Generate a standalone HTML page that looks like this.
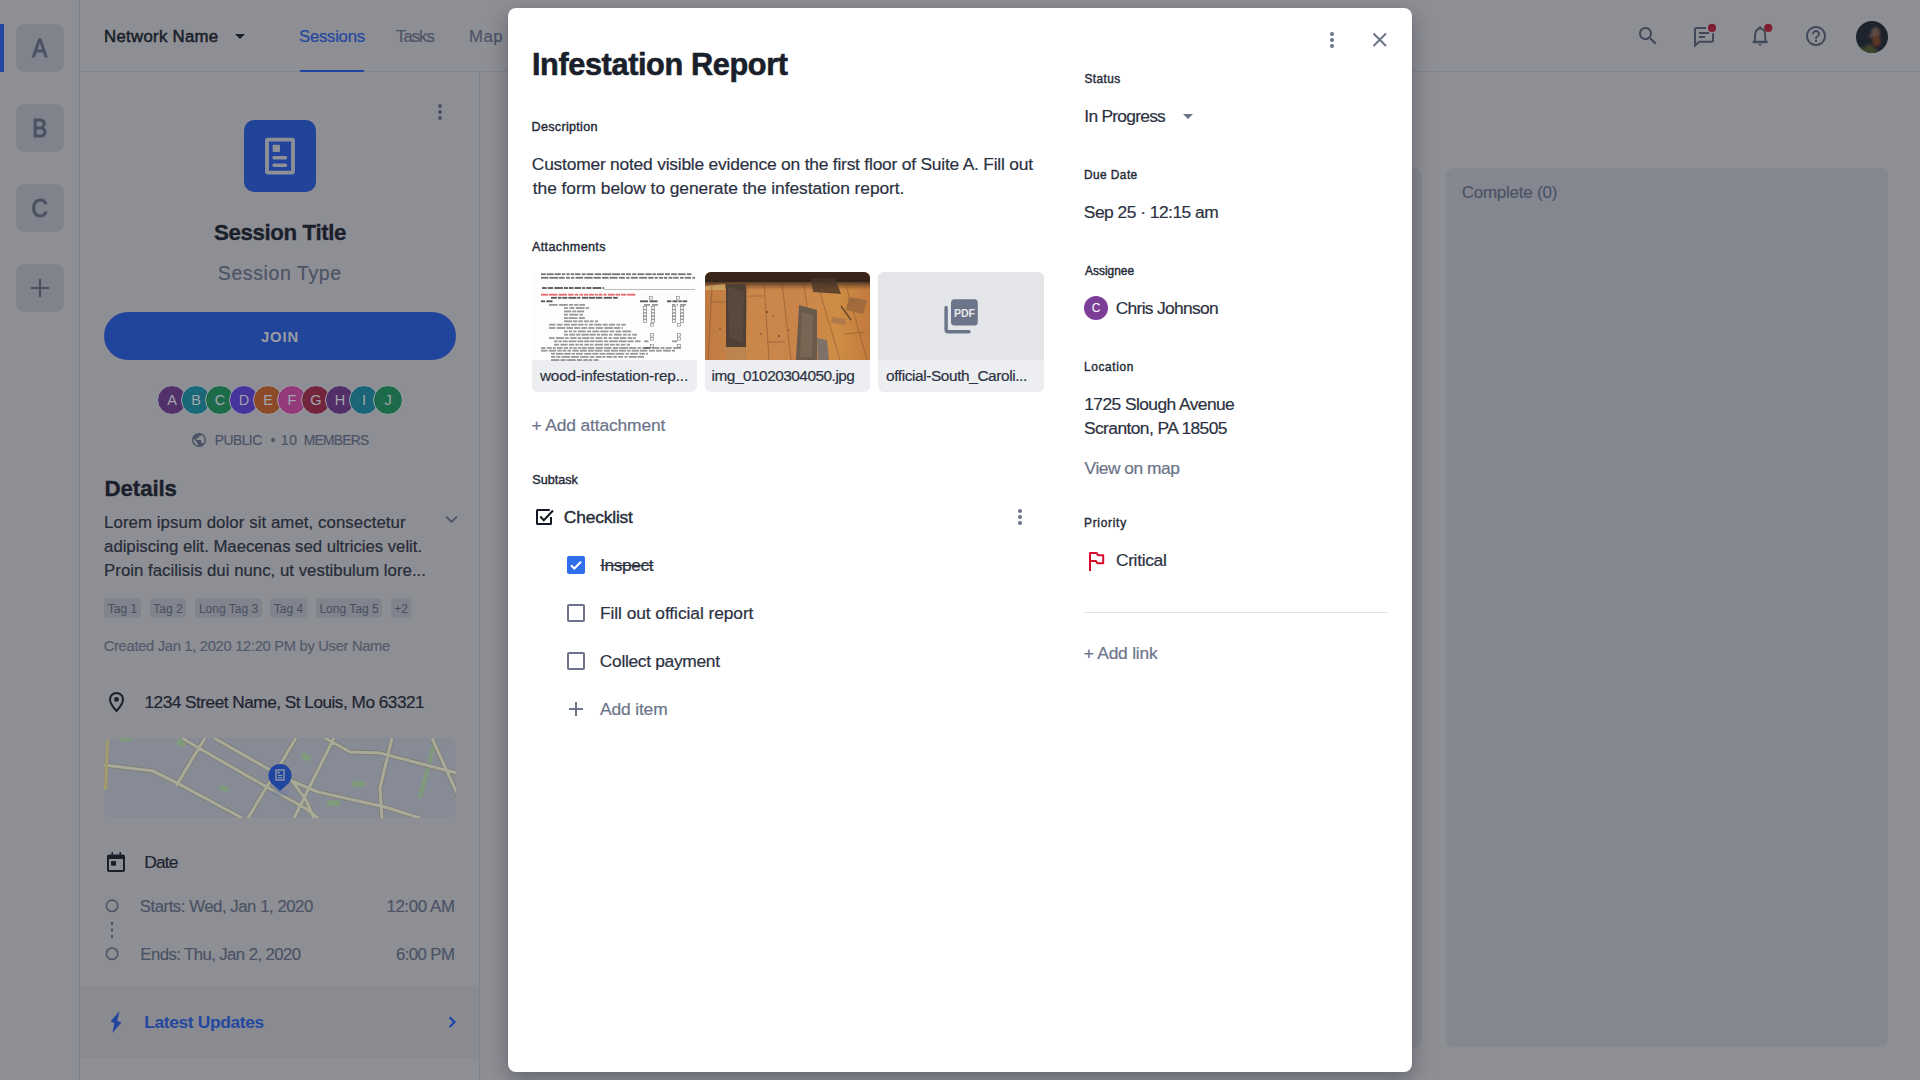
<!DOCTYPE html>
<html><head><meta charset="utf-8"><title>Infestation Report</title>
<style>
html,body{margin:0;padding:0;width:1920px;height:1080px;overflow:hidden;background:#8e8f94;font-family:'Liberation Sans',sans-serif;}
.tx{position:absolute;white-space:nowrap;line-height:1;}
.a{position:absolute;}
svg{position:absolute;overflow:visible;}
.tile{position:absolute;left:16px;width:48px;height:48px;border-radius:8px;background:#80838c;color:#4a5263;font-weight:400;font-size:26.5px;-webkit-text-stroke:1.1px #4a5263;display:flex;align-items:center;justify-content:center;}
.av{position:absolute;top:385px;width:30px;height:30px;box-sizing:border-box;border-radius:50%;border:1.2px solid #9ea0a6;color:#a3a5ab;font-size:14.5px;display:flex;align-items:center;justify-content:center;}
.tag{position:absolute;top:598px;height:20px;box-sizing:border-box;padding-top:2px;border-radius:4px;background:#81848c;color:#474f61;font-size:12px;display:flex;align-items:center;justify-content:center;}
.cb{position:absolute;left:567px;width:14px;height:14px;border:2px solid #6b7489;border-radius:2px;}
</style></head><body>
<!-- ======= background app ======= -->
<div class="a" style="left:79px;top:0;width:1px;height:1080px;background:#7b7e87"></div>
<div class="a" style="left:80px;top:71px;width:1840px;height:1px;background:#80838b"></div>
<div class="a" style="left:479px;top:72px;width:1px;height:1008px;background:#80838b"></div>
<!-- rail -->
<div class="a" style="left:0;top:24px;width:4px;height:48px;background:#2146a0"></div>
<div class="tile" style="top:24px"><span style="transform:scaleX(.85)">A</span></div>
<div class="tile" style="top:104px"><span style="transform:scaleX(.85)">B</span></div>
<div class="tile" style="top:184px"><span style="transform:scaleX(.85)">C</span></div>
<div class="tile" style="top:264px"></div>
<svg style="left:30px;top:278px" width="20" height="20"><path d="M1 10H19M10 1V19" stroke="#4a5263" stroke-width="2.2"/></svg>
<!-- top bar -->
<svg style="left:230px;top:30px" width="20" height="14"><path d="M5 4H15L10 9Z" fill="#1b1f2b"/></svg>
<div class="a" style="left:300px;top:70px;width:64px;height:2px;background:#2146a0"></div>
<!-- right icons -->
<svg style="left:1636px;top:24px" width="24" height="24" viewBox="0 0 24 24"><path fill="#40485a" d="M15.5 14h-.79l-.28-.27C15.41 12.59 16 11.11 16 9.5 16 5.91 13.09 3 9.5 3S3 5.91 3 9.5 5.91 16 9.5 16c1.61 0 3.09-.59 4.23-1.57l.27.28v.79l5 4.99L20.49 19l-4.99-5zm-6 0C7.01 14 5 11.99 5 9.5S7.01 5 9.5 5 14 7.01 14 9.5 11.99 14 9.5 14z"/></svg>
<svg style="left:1692px;top:24px" width="24" height="24" viewBox="0 0 24 24"><path fill="none" stroke="#40485a" stroke-width="2" d="M14 3.9H4.5Q3 3.9 3 5.4V21.5L7.2 17.75H19.5Q21 17.75 21 16.25V9.3M7 8.9H17M7 13H13"/><circle cx="20" cy="3.9" r="4.1" fill="#7e1f33"/></svg>
<svg style="left:1748px;top:24px" width="24" height="24" viewBox="0 0 24 24"><path fill="none" stroke="#40485a" stroke-width="2" d="M7 18V11.5C7 7.5 9 4.6 12.1 4.6C15.2 4.6 17.2 7.5 17.2 11.5V18"/><path stroke="#40485a" stroke-width="2.4" d="M4.6 18H19.6"/><circle cx="12.1" cy="3.6" r="1.3" fill="#40485a"/><path d="M10 20H14.2L12.1 22Z" fill="#40485a"/><circle cx="20.2" cy="3.9" r="4.1" fill="#7e1f33"/></svg>
<svg style="left:1804px;top:24px" width="24" height="24" viewBox="0 0 24 24"><path fill="#40485a" d="M11 18h2v-2h-2v2zm1-16C6.48 2 2 6.48 2 12s4.48 10 10 10 10-4.48 10-10S17.52 2 12 2zm0 18c-4.41 0-8-3.590-8-8s3.59-8 8-8 8 3.59 8 8-3.59 8-8 8zm0-14c-2.21 0-4 1.79-4 4h2c0-1.1.9-2 2-2s2 .9 2 2c0 2-3 1.75-3 5h2c0-2.25 3-2.5 3-5 0-2.210-1.79-4-4-4z"/></svg>
<svg style="left:1856px;top:21px" width="32" height="32" viewBox="0 0 32 32">
 <defs><clipPath id="avc"><circle cx="16" cy="16" r="16"/></clipPath><filter id="avb"><feGaussianBlur stdDeviation=".8"/></filter></defs>
 <g clip-path="url(#avc)">
  <rect width="32" height="32" fill="#1d232d"/>
  <g filter="url(#avb)">
   <ellipse cx="19.5" cy="12" rx="4.6" ry="6" fill="#5d4a42"/>
   <ellipse cx="20.5" cy="20" rx="4.2" ry="5.5" fill="#5b3526"/>
   <path d="M12 22L18 26L22 30L10 32Z" fill="#4a3a34"/>
   <ellipse cx="11" cy="31" rx="10" ry="5.5" fill="#3b4529"/>
   <ellipse cx="14.5" cy="15" rx="1.6" ry="2.2" fill="#4e3e38"/>
  </g>
 </g>
</svg>
<!-- left panel -->
<svg style="left:436px;top:102px" width="8" height="20"><circle cx="4" cy="4" r="2" fill="#4b5366"/><circle cx="4" cy="10" r="2" fill="#4b5366"/><circle cx="4" cy="16" r="2" fill="#4b5366"/></svg>
<div class="a" style="left:244px;top:120px;width:72px;height:72px;border-radius:10px;background:#21449a"></div>
<svg style="left:244px;top:120px" width="72" height="72"><rect x="23" y="19.6" width="26" height="33" fill="none" stroke="#8e9097" stroke-width="3.8" rx="1"/><rect x="28.6" y="24.8" width="7.4" height="7.2" fill="#8e9097" rx="1"/><path d="M30 37.8H41.6M30 45.3H41.6" stroke="#8e9097" stroke-width="3.4" stroke-linecap="round"/></svg>
<div class="a" style="left:104px;top:312px;width:352px;height:48px;border-radius:24px;background:#21459a"></div>
<div class="av" style="left:157px;background:#52306a">A</div>
<div class="av" style="left:181px;background:#1a6778">B</div>
<div class="av" style="left:205px;background:#1c6b4a">C</div>
<div class="av" style="left:229px;background:#44349c">D</div>
<div class="av" style="left:253px;background:#8c4a28">E</div>
<div class="av" style="left:277px;background:#943a7c">F</div>
<div class="av" style="left:301px;background:#73253d">G</div>
<div class="av" style="left:325px;background:#522f69">H</div>
<div class="av" style="left:349px;background:#1a6577">I</div>
<div class="av" style="left:373px;background:#1c6b4a">J</div>
<svg style="left:192px;top:433px" width="14" height="14" viewBox="2 2 20 20"><path fill="#4b5366" d="M12 2C6.48 2 2 6.48 2 12s4.48 10 10 10 10-4.48 10-10S17.52 2 12 2zm-1 17.93c-3.95-.49-7-3.85-7-7.930 0-.62.08-1.21.21-1.79L9 15v1c0 1.1.9 2 2 2v1.93zm6.9-2.54c-.26-.81-1-1.39-1.9-1.39h-1v-3c0-.55-.45-1-1-1H8v-2h2c.55 0 1-.45 1-1V7h2c1.1 0 2-.9 2-2v-.41c2.93 1.19 5 4.06 5 7.41 0 2.08-.8 3.97-2.1 5.39z"/></svg>
<div class="a" style="left:271px;top:438px;width:4px;height:4px;border-radius:50%;background:#4b5366"></div>
<svg style="left:444px;top:512px" width="16" height="14"><path d="M2.2 4.6L7.6 10L13 4.6" fill="none" stroke="#4b5366" stroke-width="1.9"/></svg>
<div class="tag" style="left:104px;width:37px">Tag 1</div>
<div class="tag" style="left:150px;width:36px">Tag 2</div>
<div class="tag" style="left:195px;width:67px">Long Tag 3</div>
<div class="tag" style="left:270px;width:37px">Tag 4</div>
<div class="tag" style="left:316px;width:66px">Long Tag 5</div>
<div class="tag" style="left:391px;width:20px">+2</div>
<svg style="left:104px;top:690px" width="24" height="24" viewBox="0 0 24 24"><path fill="none" stroke="#1b1f2b" stroke-width="2" d="M12.5 21C12.5 21 6 14 6 9.2C6 5.7 8.9 3 12.5 3C16.1 3 19 5.7 19 9.2C19 14 12.5 21 12.5 21Z"/><circle cx="12.5" cy="9.4" r="2.4" fill="#1b1f2b"/></svg>
<!-- map -->
<div class="a" style="left:104px;top:738px;width:352px;height:80px;border-radius:8px;overflow:hidden;background:#878b96">
<svg style="left:0;top:0" width="352" height="80" viewBox="104 738 352 80"><defs><filter id="mb" x="-2%" y="-2%" width="104%" height="104%"><feGaussianBlur stdDeviation=".45"/></filter><filter id="ps"><feGaussianBlur stdDeviation="2"/></filter></defs><g filter="url(#mb)">
 <g fill="#7f9b7c">
  <rect x="177" y="738" width="9" height="8" transform="rotate(20 181 742)"/>
  <rect x="119" y="738" width="12" height="3"/>
  <rect x="302" y="754" width="9" height="6" transform="rotate(25 306 757)"/>
  <rect x="353" y="781" width="12" height="6"/>
  <rect x="220" y="786" width="9" height="5" transform="rotate(20 224 788)"/>
  <rect x="327" y="800" width="13" height="6"/>
  <path d="M432 744L436 744L422 798L418 798Z"/>
 </g>
 <g fill="none" stroke="#7b7d78" stroke-width="4.8">
  <path id="r" d="M104 765L153 771L175 782L242 818M182 738L197 747L265 786L305 808L318 818M214 738L270 770L294 782L318 792L385 807L420 818M325 738L350 752L380 753L460 774M205 738L176 786M296 738L280 765L248 818M334 738L306 794L294 818M392 738L380 788L382 818M432 738L460 800M293 782L306 800L314 818"/>
 </g>
 <g fill="none" stroke="#a8a996" stroke-width="3.1">
  <path d="M104 765L153 771L175 782L242 818M182 738L197 747L265 786L305 808L318 818M214 738L270 770L294 782L318 792L385 807L420 818M325 738L350 752L380 753L460 774M205 738L176 786M296 738L280 765L248 818M334 738L306 794L294 818M392 738L380 788L382 818M432 738L460 800M293 782L306 800L314 818"/>
 </g>
 <path d="M106 738L109 738L107 790L104 790Z" fill="#a39c68"/></g>
 <ellipse cx="281" cy="793" rx="9" ry="2.5" fill="#5a70b0" opacity=".5" filter="url(#ps)"/>
 <path d="M280 791L271.5 783.5A11.6 11.6 0 1 1 288.5 783.5Z" fill="#2146a0"/>
 <rect x="276" y="770" width="8" height="10" fill="none" stroke="#9da0a8" stroke-width="1.2"/>
 <path d="M277.8 775.5H282.2M277.8 777.8H282.2" stroke="#9da0a8" stroke-width="1"/>
 <rect x="277.6" y="771.6" width="2" height="2" fill="#9da0a8"/>
</svg>
</div>
<svg style="left:104px;top:850px" width="24" height="24" viewBox="0 0 24 24"><path fill="#1b1f2b" d="M5 4.5H7.5V2H9V4.5H15.5V2H17V4.5H19A2 2 0 0 1 21 6.5V20A2 2 0 0 1 19 22H5A2 2 0 0 1 3 20V6.5A2 2 0 0 1 5 4.5ZM5 9V20H19V9Z"/><rect x="7" y="11" width="5" height="4.7" rx="1" fill="#1b1f2b"/></svg>
<svg style="left:104px;top:898px" width="16" height="64"><circle cx="8.1" cy="7.8" r="5.7" fill="none" stroke="#4b5366" stroke-width="1.6"/><path d="M8 24V40" stroke="#4b5366" stroke-width="2" stroke-dasharray="3 3.5"/><circle cx="8.1" cy="55.7" r="5.7" fill="none" stroke="#4b5366" stroke-width="1.6"/></svg>
<div class="a" style="left:80px;top:986px;width:399px;height:72px;background:#8a8b90"></div>
<svg style="left:104px;top:1008px" width="24" height="28"><path d="M15.6 3L6.5 13.5L10.4 14.9L8.3 25L17.5 14.4L13.2 13Z" fill="#2146a0"/></svg>
<svg style="left:440px;top:1014px" width="16" height="16"><path d="M9.6 3.2L14.5 8.1L9.6 13" fill="none" stroke="#1f46a6" stroke-width="2.2"/></svg>
<!-- columns -->
<div class="a" style="left:980px;top:168px;width:442px;height:879px;border-radius:8px;background:#858790"></div>
<div class="a" style="left:1446px;top:168px;width:442px;height:879px;border-radius:8px;background:#858790"></div>
<div id="t0" class="tx" style="left:104.1px;top:29.00px;font-size:16.80px;font-weight:400;color:#1b1f2b;letter-spacing:0.273px;-webkit-text-stroke:0.55px currentColor;">Network Name</div>
<div id="t1" class="tx" style="left:299.0px;top:29.00px;font-size:16.80px;font-weight:400;color:#2447a0;letter-spacing:-0.286px;-webkit-text-stroke:0.2px currentColor;">Sessions</div>
<div id="t2" class="tx" style="left:396.0px;top:29.00px;font-size:16.80px;font-weight:400;color:#4b5366;letter-spacing:-1.000px;-webkit-text-stroke:0.2px currentColor;">Tasks</div>
<div id="t3" class="tx" style="left:469.0px;top:29.00px;font-size:16.80px;font-weight:400;color:#4b5366;letter-spacing:0.500px;-webkit-text-stroke:0.2px currentColor;">Map</div>
<div id="t4" class="tx" style="left:214.1px;top:222.00px;font-size:22.30px;font-weight:700;color:#1b1f2b;letter-spacing:-0.398px;-webkit-text-stroke:0.35px currentColor;">Session Title</div>
<div id="t5" class="tx" style="left:217.8px;top:264.00px;font-size:19.50px;font-weight:400;color:#4b5366;letter-spacing:0.598px;-webkit-text-stroke:0.2px currentColor;">Session Type</div>
<div id="t6" class="tx" style="left:260.9px;top:330.00px;font-size:14.80px;font-weight:700;color:#9a9ca3;letter-spacing:0.931px;">JOIN</div>
<div id="t7" class="tx" style="left:214.8px;top:434.00px;font-size:13.80px;font-weight:400;color:#4b5366;letter-spacing:-0.500px;-webkit-text-stroke:0.2px currentColor;">PUBLIC</div>
<div id="t8" class="tx" style="left:281.1px;top:434.00px;font-size:13.80px;font-weight:400;color:#4b5366;letter-spacing:0.600px;-webkit-text-stroke:0.2px currentColor;">10</div>
<div id="t9" class="tx" style="left:303.7px;top:434.00px;font-size:13.80px;font-weight:400;color:#4b5366;letter-spacing:-0.702px;-webkit-text-stroke:0.2px currentColor;">MEMBERS</div>
<div id="t10" class="tx" style="left:104.6px;top:478.00px;font-size:22.30px;font-weight:700;color:#1b1f2b;letter-spacing:-0.132px;-webkit-text-stroke:0.35px currentColor;">Details</div>
<div id="t11" class="tx" style="left:104.1px;top:515.00px;font-size:16.80px;font-weight:400;color:#262b38;letter-spacing:0.080px;-webkit-text-stroke:0.2px currentColor;">Lorem ipsum dolor sit amet, consectetur</div>
<div id="t12" class="tx" style="left:104.1px;top:539.00px;font-size:16.80px;font-weight:400;color:#262b38;letter-spacing:-0.044px;-webkit-text-stroke:0.2px currentColor;">adipiscing elit. Maecenas sed ultricies velit.</div>
<div id="t13" class="tx" style="left:104.1px;top:563.00px;font-size:16.80px;font-weight:400;color:#262b38;letter-spacing:0.021px;-webkit-text-stroke:0.2px currentColor;">Proin facilisis dui nunc, ut vestibulum lore...</div>
<div id="t14" class="tx" style="left:103.7px;top:639.00px;font-size:14.70px;font-weight:400;color:#535b6c;letter-spacing:-0.286px;-webkit-text-stroke:0.2px currentColor;">Created Jan 1, 2020 12:20 PM by User Name</div>
<div id="t15" class="tx" style="left:144.5px;top:694.00px;font-size:17.20px;font-weight:400;color:#1f2431;letter-spacing:-0.487px;-webkit-text-stroke:0.2px currentColor;">1234 Street Name, St Louis, Mo 63321</div>
<div id="t16" class="tx" style="left:144.2px;top:854.00px;font-size:17.40px;font-weight:400;color:#1f2431;letter-spacing:-0.868px;-webkit-text-stroke:0.2px currentColor;">Date</div>
<div id="t17" class="tx" style="left:139.8px;top:899.00px;font-size:16.80px;font-weight:400;color:#4b5366;letter-spacing:-0.473px;-webkit-text-stroke:0.2px currentColor;">Starts: Wed, Jan 1, 2020</div>
<div id="t18" class="tx" style="left:386.4px;top:899.00px;font-size:16.80px;font-weight:400;color:#4b5366;letter-spacing:-0.344px;-webkit-text-stroke:0.2px currentColor;">12:00 AM</div>
<div id="t19" class="tx" style="left:140.3px;top:947.00px;font-size:16.80px;font-weight:400;color:#4b5366;letter-spacing:-0.590px;-webkit-text-stroke:0.2px currentColor;">Ends: Thu, Jan 2, 2020</div>
<div id="t20" class="tx" style="left:395.9px;top:947.00px;font-size:16.80px;font-weight:400;color:#4b5366;letter-spacing:-0.568px;-webkit-text-stroke:0.2px currentColor;">6:00 PM</div>
<div id="t21" class="tx" style="left:144.2px;top:1014.00px;font-size:17.40px;font-weight:700;color:#2447a0;letter-spacing:-0.351px;">Latest Updates</div>
<div id="t22" class="tx" style="left:1461.7px;top:184.00px;font-size:17.00px;font-weight:400;color:#4b5366;letter-spacing:-0.239px;-webkit-text-stroke:0.2px currentColor;">Complete (0)</div>
<!-- ======= modal ======= -->
<div class="a" style="left:508px;top:8px;width:904px;height:1064px;border-radius:8px;background:#ffffff;box-shadow:0 6px 20px rgba(16,22,38,.36)"></div>
<svg style="left:1326px;top:28px" width="12" height="24"><circle cx="6" cy="6" r="2" fill="#6b7489"/><circle cx="6" cy="12" r="2" fill="#6b7489"/><circle cx="6" cy="18" r="2" fill="#6b7489"/></svg>
<svg style="left:1368px;top:28px" width="24" height="24"><path d="M5.5 5.5L18 18M18 5.5L5.5 18" stroke="#6b7489" stroke-width="2"/></svg>
<!-- attachments -->
<div class="a" style="left:532px;top:272px;width:165px;height:120px;border-radius:6px;overflow:hidden;background:#eceef1">
  <div class="a" style="left:0;top:0;width:165px;height:88px;background:#fdfdfd"></div>
  <svg style="left:0;top:0" width="165" height="88"><g style="filter:blur(.25px)"><rect x="9.0" y="1.3" width="4.9" height="1.8" fill="#222" opacity="0.62"/><rect x="14.8" y="1.3" width="6.9" height="1.8" fill="#222" opacity="0.62"/><rect x="22.6" y="1.3" width="6.2" height="1.8" fill="#222" opacity="0.62"/><rect x="29.9" y="1.3" width="3.3" height="1.8" fill="#222" opacity="0.62"/><rect x="34.4" y="1.3" width="3.2" height="1.8" fill="#222" opacity="0.62"/><rect x="38.7" y="1.3" width="3.4" height="1.8" fill="#222" opacity="0.62"/><rect x="43.0" y="1.3" width="5.5" height="1.8" fill="#222" opacity="0.62"/><rect x="49.9" y="1.3" width="3.7" height="1.8" fill="#222" opacity="0.62"/><rect x="54.6" y="1.3" width="6.8" height="1.8" fill="#222" opacity="0.62"/><rect x="62.8" y="1.3" width="6.5" height="1.8" fill="#222" opacity="0.62"/><rect x="70.4" y="1.3" width="8.9" height="1.8" fill="#222" opacity="0.62"/><rect x="80.1" y="1.3" width="8.2" height="1.8" fill="#222" opacity="0.62"/><rect x="89.2" y="1.3" width="3.9" height="1.8" fill="#222" opacity="0.62"/><rect x="94.0" y="1.3" width="4.9" height="1.8" fill="#222" opacity="0.62"/><rect x="100.2" y="1.3" width="4.1" height="1.8" fill="#222" opacity="0.62"/><rect x="105.5" y="1.3" width="6.8" height="1.8" fill="#222" opacity="0.62"/><rect x="113.4" y="1.3" width="6.3" height="1.8" fill="#222" opacity="0.62"/><rect x="120.5" y="1.3" width="3.4" height="1.8" fill="#222" opacity="0.62"/><rect x="124.8" y="1.3" width="7.1" height="1.8" fill="#222" opacity="0.62"/><rect x="133.0" y="1.3" width="4.9" height="1.8" fill="#222" opacity="0.62"/><rect x="139.1" y="1.3" width="5.7" height="1.8" fill="#222" opacity="0.62"/><rect x="145.8" y="1.3" width="7.8" height="1.8" fill="#222" opacity="0.62"/><rect x="154.9" y="1.3" width="4.5" height="1.8" fill="#222" opacity="0.62"/><rect x="9.0" y="4.9" width="7.4" height="1.8" fill="#222" opacity="0.62"/><rect x="17.4" y="4.9" width="8.9" height="1.8" fill="#222" opacity="0.62"/><rect x="27.1" y="4.9" width="5.5" height="1.8" fill="#222" opacity="0.62"/><rect x="34.0" y="4.9" width="3.9" height="1.8" fill="#222" opacity="0.62"/><rect x="39.0" y="4.9" width="3.2" height="1.8" fill="#222" opacity="0.62"/><rect x="43.5" y="4.9" width="7.6" height="1.8" fill="#222" opacity="0.62"/><rect x="52.3" y="4.9" width="8.3" height="1.8" fill="#222" opacity="0.62"/><rect x="61.6" y="4.9" width="7.2" height="1.8" fill="#222" opacity="0.62"/><rect x="70.0" y="4.9" width="6.5" height="1.8" fill="#222" opacity="0.62"/><rect x="77.6" y="4.9" width="8.0" height="1.8" fill="#222" opacity="0.62"/><rect x="87.1" y="4.9" width="5.8" height="1.8" fill="#222" opacity="0.62"/><rect x="94.2" y="4.9" width="3.4" height="1.8" fill="#222" opacity="0.62"/><rect x="98.9" y="4.9" width="6.9" height="1.8" fill="#222" opacity="0.62"/><rect x="107.2" y="4.9" width="7.9" height="1.8" fill="#222" opacity="0.62"/><rect x="116.2" y="4.9" width="5.3" height="1.8" fill="#222" opacity="0.62"/><rect x="122.7" y="4.9" width="3.1" height="1.8" fill="#222" opacity="0.62"/><rect x="127.0" y="4.9" width="4.0" height="1.8" fill="#222" opacity="0.62"/><rect x="131.9" y="4.9" width="3.4" height="1.8" fill="#222" opacity="0.62"/><rect x="136.6" y="4.9" width="3.8" height="1.8" fill="#222" opacity="0.62"/><rect x="141.3" y="4.9" width="5.3" height="1.8" fill="#222" opacity="0.62"/><rect x="148.1" y="4.9" width="3.5" height="1.8" fill="#222" opacity="0.62"/><rect x="152.7" y="4.9" width="6.3" height="1.8" fill="#222" opacity="0.62"/><rect x="160.4" y="4.9" width="2.6" height="1.8" fill="#222" opacity="0.62"/><rect x="10.0" y="15.1" width="4.7" height="1.8" fill="#151515" opacity="0.72"/><rect x="15.8" y="15.1" width="5.2" height="1.8" fill="#151515" opacity="0.72"/><rect x="22.3" y="15.1" width="8.7" height="1.8" fill="#151515" opacity="0.72"/><rect x="32.0" y="15.1" width="4.1" height="1.8" fill="#151515" opacity="0.72"/><rect x="37.0" y="15.1" width="4.4" height="1.8" fill="#151515" opacity="0.72"/><rect x="42.5" y="15.1" width="6.5" height="1.8" fill="#151515" opacity="0.72"/><rect x="50.1" y="15.1" width="3.0" height="1.8" fill="#151515" opacity="0.72"/><rect x="54.2" y="15.1" width="5.2" height="1.8" fill="#151515" opacity="0.72"/><rect x="60.6" y="15.1" width="8.7" height="1.8" fill="#151515" opacity="0.72"/><rect x="70.6" y="15.1" width="1.4" height="1.8" fill="#151515" opacity="0.72"/><rect x="9.0" y="21.8" width="7.1" height="1.8" fill="#e63535" opacity="0.75"/><rect x="16.9" y="21.8" width="8.4" height="1.8" fill="#e63535" opacity="0.75"/><rect x="26.6" y="21.8" width="8.2" height="1.8" fill="#e63535" opacity="0.75"/><rect x="36.2" y="21.8" width="5.4" height="1.8" fill="#e63535" opacity="0.75"/><rect x="42.7" y="21.8" width="3.6" height="1.8" fill="#e63535" opacity="0.75"/><rect x="47.5" y="21.8" width="3.4" height="1.8" fill="#e63535" opacity="0.75"/><rect x="51.8" y="21.8" width="4.3" height="1.8" fill="#e63535" opacity="0.75"/><rect x="56.9" y="21.8" width="5.0" height="1.8" fill="#e63535" opacity="0.75"/><rect x="62.8" y="21.8" width="3.0" height="1.8" fill="#e63535" opacity="0.75"/><rect x="66.7" y="21.8" width="3.6" height="1.8" fill="#e63535" opacity="0.75"/><rect x="71.4" y="21.8" width="3.2" height="1.8" fill="#e63535" opacity="0.75"/><rect x="75.9" y="21.8" width="6.7" height="1.8" fill="#e63535" opacity="0.75"/><rect x="83.5" y="21.8" width="4.5" height="1.8" fill="#e63535" opacity="0.75"/><rect x="89.1" y="21.8" width="5.2" height="1.8" fill="#e63535" opacity="0.75"/><rect x="95.2" y="21.8" width="8.1" height="1.8" fill="#e63535" opacity="0.75"/><rect x="19.0" y="24.9" width="5.8" height="1.8" fill="#151515" opacity="0.72"/><rect x="25.9" y="24.9" width="3.5" height="1.8" fill="#151515" opacity="0.72"/><rect x="30.3" y="24.9" width="5.1" height="1.8" fill="#151515" opacity="0.72"/><rect x="36.4" y="24.9" width="8.0" height="1.8" fill="#151515" opacity="0.72"/><rect x="45.2" y="24.9" width="3.1" height="1.8" fill="#151515" opacity="0.72"/><rect x="49.9" y="24.9" width="6.2" height="1.8" fill="#151515" opacity="0.72"/><rect x="56.9" y="24.9" width="6.3" height="1.8" fill="#151515" opacity="0.72"/><rect x="64.0" y="24.9" width="6.2" height="1.8" fill="#151515" opacity="0.72"/><rect x="71.7" y="24.9" width="8.2" height="1.8" fill="#151515" opacity="0.72"/><rect x="81.1" y="24.9" width="4.6" height="1.8" fill="#151515" opacity="0.72"/><rect x="9.0" y="28.4" width="4.0" height="1.8" fill="#151515" opacity="0.72"/><rect x="14.3" y="28.4" width="6.2" height="1.8" fill="#151515" opacity="0.72"/><rect x="108.0" y="28.4" width="7.9" height="1.8" fill="#151515" opacity="0.72"/><rect x="117.4" y="28.4" width="8.1" height="1.8" fill="#151515" opacity="0.72"/><rect x="135.0" y="28.4" width="4.4" height="1.8" fill="#151515" opacity="0.72"/><rect x="140.5" y="28.4" width="5.1" height="1.8" fill="#151515" opacity="0.72"/><rect x="146.5" y="28.4" width="3.2" height="1.8" fill="#151515" opacity="0.72"/><rect x="150.6" y="28.4" width="4.6" height="1.8" fill="#151515" opacity="0.72"/><rect x="17.0" y="32.0" width="8.6" height="1.8" fill="#333" opacity="0.50"/><rect x="27.1" y="32.0" width="8.7" height="1.8" fill="#333" opacity="0.50"/><rect x="36.9" y="32.0" width="4.3" height="1.8" fill="#333" opacity="0.50"/><rect x="42.2" y="32.0" width="4.2" height="1.8" fill="#333" opacity="0.50"/><rect x="47.3" y="32.0" width="5.7" height="1.8" fill="#333" opacity="0.50"/><rect x="112.0" y="32.0" width="6.0" height="1.8" fill="#333" opacity="0.50"/><rect x="120.0" y="32.0" width="6.0" height="1.8" fill="#333" opacity="0.50"/><rect x="140.0" y="32.0" width="3.5" height="1.8" fill="#333" opacity="0.50"/><rect x="144.8" y="32.0" width="1.2" height="1.8" fill="#333" opacity="0.50"/><rect x="148.0" y="32.0" width="6.0" height="1.8" fill="#333" opacity="0.50"/><rect x="32.0" y="35.1" width="4.1" height="1.8" fill="#333" opacity="0.50"/><rect x="37.4" y="35.1" width="5.0" height="1.8" fill="#333" opacity="0.50"/><rect x="43.8" y="35.1" width="8.8" height="1.8" fill="#333" opacity="0.50"/><rect x="53.7" y="35.1" width="3.3" height="1.8" fill="#333" opacity="0.50"/><rect x="32.0" y="38.5" width="7.3" height="1.8" fill="#333" opacity="0.50"/><rect x="40.3" y="38.5" width="3.8" height="1.8" fill="#333" opacity="0.50"/><rect x="44.9" y="38.5" width="7.1" height="1.8" fill="#333" opacity="0.50"/><rect x="32.0" y="41.8" width="3.9" height="1.8" fill="#333" opacity="0.50"/><rect x="37.3" y="41.8" width="8.9" height="1.8" fill="#333" opacity="0.50"/><rect x="47.4" y="41.8" width="3.6" height="1.8" fill="#333" opacity="0.50"/><rect x="32.0" y="45.2" width="3.8" height="1.8" fill="#333" opacity="0.50"/><rect x="36.6" y="45.2" width="8.8" height="1.8" fill="#333" opacity="0.50"/><rect x="46.7" y="45.2" width="6.2" height="1.8" fill="#333" opacity="0.50"/><rect x="32.0" y="48.4" width="8.0" height="1.8" fill="#333" opacity="0.50"/><rect x="40.9" y="48.4" width="4.5" height="1.8" fill="#333" opacity="0.50"/><rect x="46.4" y="48.4" width="4.4" height="1.8" fill="#333" opacity="0.50"/><rect x="52.1" y="48.4" width="4.6" height="1.8" fill="#333" opacity="0.50"/><rect x="57.7" y="48.4" width="3.8" height="1.8" fill="#333" opacity="0.50"/><rect x="62.9" y="48.4" width="3.1" height="1.8" fill="#333" opacity="0.50"/><rect x="17.0" y="51.8" width="6.5" height="1.8" fill="#333" opacity="0.50"/><rect x="24.9" y="51.8" width="5.5" height="1.8" fill="#333" opacity="0.50"/><rect x="31.9" y="51.8" width="6.0" height="1.8" fill="#333" opacity="0.50"/><rect x="39.1" y="51.8" width="6.1" height="1.8" fill="#333" opacity="0.50"/><rect x="46.0" y="51.8" width="5.6" height="1.8" fill="#333" opacity="0.50"/><rect x="52.6" y="51.8" width="3.0" height="1.8" fill="#333" opacity="0.50"/><rect x="57.0" y="51.8" width="4.0" height="1.8" fill="#333" opacity="0.50"/><rect x="62.2" y="51.8" width="7.4" height="1.8" fill="#333" opacity="0.50"/><rect x="70.7" y="51.8" width="5.0" height="1.8" fill="#333" opacity="0.50"/><rect x="76.8" y="51.8" width="6.3" height="1.8" fill="#333" opacity="0.50"/><rect x="84.5" y="51.8" width="3.6" height="1.8" fill="#333" opacity="0.50"/><rect x="89.3" y="51.8" width="4.5" height="1.8" fill="#333" opacity="0.50"/><rect x="17.0" y="55.1" width="6.4" height="1.8" fill="#333" opacity="0.50"/><rect x="24.7" y="55.1" width="8.5" height="1.8" fill="#333" opacity="0.50"/><rect x="34.3" y="55.1" width="6.7" height="1.8" fill="#333" opacity="0.50"/><rect x="42.1" y="55.1" width="6.1" height="1.8" fill="#333" opacity="0.50"/><rect x="49.5" y="55.1" width="5.7" height="1.8" fill="#333" opacity="0.50"/><rect x="56.4" y="55.1" width="5.9" height="1.8" fill="#333" opacity="0.50"/><rect x="63.7" y="55.1" width="7.2" height="1.8" fill="#333" opacity="0.50"/><rect x="72.3" y="55.1" width="8.7" height="1.8" fill="#333" opacity="0.50"/><rect x="81.9" y="55.1" width="6.4" height="1.8" fill="#333" opacity="0.50"/><rect x="89.8" y="55.1" width="1.2" height="1.8" fill="#333" opacity="0.50"/><rect x="32.0" y="58.5" width="3.7" height="1.8" fill="#333" opacity="0.50"/><rect x="36.8" y="58.5" width="3.4" height="1.8" fill="#333" opacity="0.50"/><rect x="41.2" y="58.5" width="3.4" height="1.8" fill="#333" opacity="0.50"/><rect x="46.0" y="58.5" width="7.7" height="1.8" fill="#333" opacity="0.50"/><rect x="55.1" y="58.5" width="3.9" height="1.8" fill="#333" opacity="0.50"/><rect x="60.3" y="58.5" width="7.0" height="1.8" fill="#333" opacity="0.50"/><rect x="68.2" y="58.5" width="8.3" height="1.8" fill="#333" opacity="0.50"/><rect x="77.9" y="58.5" width="4.3" height="1.8" fill="#333" opacity="0.50"/><rect x="83.7" y="58.5" width="5.4" height="1.8" fill="#333" opacity="0.50"/><rect x="90.3" y="58.5" width="8.9" height="1.8" fill="#333" opacity="0.50"/><rect x="32.0" y="61.8" width="4.0" height="1.8" fill="#333" opacity="0.50"/><rect x="37.1" y="61.8" width="6.1" height="1.8" fill="#333" opacity="0.50"/><rect x="44.2" y="61.8" width="4.2" height="1.8" fill="#333" opacity="0.50"/><rect x="49.4" y="61.8" width="7.3" height="1.8" fill="#333" opacity="0.50"/><rect x="57.5" y="61.8" width="6.3" height="1.8" fill="#333" opacity="0.50"/><rect x="65.0" y="61.8" width="3.1" height="1.8" fill="#333" opacity="0.50"/><rect x="69.1" y="61.8" width="6.7" height="1.8" fill="#333" opacity="0.50"/><rect x="77.0" y="61.8" width="3.4" height="1.8" fill="#333" opacity="0.50"/><rect x="81.9" y="61.8" width="7.7" height="1.8" fill="#333" opacity="0.50"/><rect x="91.1" y="61.8" width="3.6" height="1.8" fill="#333" opacity="0.50"/><rect x="95.7" y="61.8" width="3.2" height="1.8" fill="#333" opacity="0.50"/><rect x="100.3" y="61.8" width="4.6" height="1.8" fill="#333" opacity="0.50"/><rect x="17.0" y="65.2" width="5.5" height="1.8" fill="#333" opacity="0.50"/><rect x="24.0" y="65.2" width="7.9" height="1.8" fill="#333" opacity="0.50"/><rect x="32.9" y="65.2" width="3.9" height="1.8" fill="#333" opacity="0.50"/><rect x="38.2" y="65.2" width="6.4" height="1.8" fill="#333" opacity="0.50"/><rect x="45.9" y="65.2" width="3.5" height="1.8" fill="#333" opacity="0.50"/><rect x="50.3" y="65.2" width="7.1" height="1.8" fill="#333" opacity="0.50"/><rect x="58.5" y="65.2" width="3.4" height="1.8" fill="#333" opacity="0.50"/><rect x="63.4" y="65.2" width="6.8" height="1.8" fill="#333" opacity="0.50"/><rect x="71.6" y="65.2" width="3.5" height="1.8" fill="#333" opacity="0.50"/><rect x="76.5" y="65.2" width="3.4" height="1.8" fill="#333" opacity="0.50"/><rect x="81.3" y="65.2" width="5.7" height="1.8" fill="#333" opacity="0.50"/><rect x="88.0" y="65.2" width="6.3" height="1.8" fill="#333" opacity="0.50"/><rect x="95.8" y="65.2" width="4.6" height="1.8" fill="#333" opacity="0.50"/><rect x="101.3" y="65.2" width="2.7" height="1.8" fill="#333" opacity="0.50"/><rect x="22.0" y="68.4" width="3.7" height="1.8" fill="#333" opacity="0.50"/><rect x="26.6" y="68.4" width="3.3" height="1.8" fill="#333" opacity="0.50"/><rect x="30.8" y="68.4" width="4.9" height="1.8" fill="#333" opacity="0.50"/><rect x="36.7" y="68.4" width="7.6" height="1.8" fill="#333" opacity="0.50"/><rect x="45.3" y="68.4" width="6.0" height="1.8" fill="#333" opacity="0.50"/><rect x="52.2" y="68.4" width="5.1" height="1.8" fill="#333" opacity="0.50"/><rect x="58.1" y="68.4" width="4.5" height="1.8" fill="#333" opacity="0.50"/><rect x="63.4" y="68.4" width="7.4" height="1.8" fill="#333" opacity="0.50"/><rect x="72.0" y="68.4" width="4.1" height="1.8" fill="#333" opacity="0.50"/><rect x="77.2" y="68.4" width="8.6" height="1.8" fill="#333" opacity="0.50"/><rect x="86.7" y="68.4" width="7.9" height="1.8" fill="#333" opacity="0.50"/><rect x="95.7" y="68.4" width="6.0" height="1.8" fill="#333" opacity="0.50"/><rect x="103.1" y="68.4" width="5.4" height="1.8" fill="#333" opacity="0.50"/><rect x="22.0" y="71.8" width="5.1" height="1.8" fill="#333" opacity="0.50"/><rect x="28.4" y="71.8" width="7.2" height="1.8" fill="#333" opacity="0.50"/><rect x="36.9" y="71.8" width="5.4" height="1.8" fill="#333" opacity="0.50"/><rect x="43.4" y="71.8" width="3.3" height="1.8" fill="#333" opacity="0.50"/><rect x="47.6" y="71.8" width="3.4" height="1.8" fill="#333" opacity="0.50"/><rect x="52.4" y="71.8" width="4.5" height="1.8" fill="#333" opacity="0.50"/><rect x="57.8" y="71.8" width="3.5" height="1.8" fill="#333" opacity="0.50"/><rect x="62.7" y="71.8" width="8.2" height="1.8" fill="#333" opacity="0.50"/><rect x="72.2" y="71.8" width="4.7" height="1.8" fill="#333" opacity="0.50"/><rect x="77.9" y="71.8" width="4.8" height="1.8" fill="#333" opacity="0.50"/><rect x="83.7" y="71.8" width="3.9" height="1.8" fill="#333" opacity="0.50"/><rect x="88.8" y="71.8" width="4.6" height="1.8" fill="#333" opacity="0.50"/><rect x="94.8" y="71.8" width="3.2" height="1.8" fill="#333" opacity="0.50"/><rect x="9.0" y="75.1" width="4.5" height="1.8" fill="#333" opacity="0.50"/><rect x="14.9" y="75.1" width="4.9" height="1.8" fill="#333" opacity="0.50"/><rect x="20.8" y="75.1" width="3.0" height="1.8" fill="#333" opacity="0.50"/><rect x="24.9" y="75.1" width="5.8" height="1.8" fill="#333" opacity="0.50"/><rect x="31.9" y="75.1" width="4.2" height="1.8" fill="#333" opacity="0.50"/><rect x="37.3" y="75.1" width="3.0" height="1.8" fill="#333" opacity="0.50"/><rect x="41.3" y="75.1" width="3.5" height="1.8" fill="#333" opacity="0.50"/><rect x="45.9" y="75.1" width="3.3" height="1.8" fill="#333" opacity="0.50"/><rect x="50.0" y="75.1" width="4.8" height="1.8" fill="#333" opacity="0.50"/><rect x="55.8" y="75.1" width="6.5" height="1.8" fill="#333" opacity="0.50"/><rect x="63.5" y="75.1" width="7.5" height="1.8" fill="#333" opacity="0.50"/><rect x="72.2" y="75.1" width="7.3" height="1.8" fill="#333" opacity="0.50"/><rect x="80.9" y="75.1" width="5.3" height="1.8" fill="#333" opacity="0.50"/><rect x="87.3" y="75.1" width="8.9" height="1.8" fill="#333" opacity="0.50"/><rect x="97.1" y="75.1" width="7.3" height="1.8" fill="#333" opacity="0.50"/><rect x="105.7" y="75.1" width="3.3" height="1.8" fill="#333" opacity="0.50"/><rect x="110.3" y="75.1" width="8.4" height="1.8" fill="#333" opacity="0.50"/><rect x="119.9" y="75.1" width="7.4" height="1.8" fill="#333" opacity="0.50"/><rect x="128.7" y="75.1" width="3.8" height="1.8" fill="#333" opacity="0.50"/><rect x="133.7" y="75.1" width="6.0" height="1.8" fill="#333" opacity="0.50"/><rect x="141.1" y="75.1" width="7.8" height="1.8" fill="#333" opacity="0.50"/><rect x="9.0" y="77.8" width="6.5" height="1.8" fill="#333" opacity="0.50"/><rect x="16.9" y="77.8" width="7.1" height="1.8" fill="#333" opacity="0.50"/><rect x="25.3" y="77.8" width="4.4" height="1.8" fill="#333" opacity="0.50"/><rect x="30.5" y="77.8" width="3.8" height="1.8" fill="#333" opacity="0.50"/><rect x="35.4" y="77.8" width="3.6" height="1.8" fill="#333" opacity="0.50"/><rect x="40.4" y="77.8" width="6.4" height="1.8" fill="#333" opacity="0.50"/><rect x="48.0" y="77.8" width="6.8" height="1.8" fill="#333" opacity="0.50"/><rect x="56.0" y="77.8" width="5.9" height="1.8" fill="#333" opacity="0.50"/><rect x="62.7" y="77.8" width="7.8" height="1.8" fill="#333" opacity="0.50"/><rect x="71.9" y="77.8" width="6.0" height="1.8" fill="#333" opacity="0.50"/><rect x="79.0" y="77.8" width="7.0" height="1.8" fill="#333" opacity="0.50"/><rect x="86.8" y="77.8" width="7.4" height="1.8" fill="#333" opacity="0.50"/><rect x="95.2" y="77.8" width="3.4" height="1.8" fill="#333" opacity="0.50"/><rect x="99.7" y="77.8" width="7.4" height="1.8" fill="#333" opacity="0.50"/><rect x="108.0" y="77.8" width="7.4" height="1.8" fill="#333" opacity="0.50"/><rect x="116.9" y="77.8" width="6.0" height="1.8" fill="#333" opacity="0.50"/><rect x="123.9" y="77.8" width="5.9" height="1.8" fill="#333" opacity="0.50"/><rect x="131.1" y="77.8" width="7.6" height="1.8" fill="#333" opacity="0.50"/><rect x="139.9" y="77.8" width="3.1" height="1.8" fill="#333" opacity="0.50"/><rect x="19.0" y="80.9" width="3.9" height="1.8" fill="#333" opacity="0.50"/><rect x="23.9" y="80.9" width="7.5" height="1.8" fill="#333" opacity="0.50"/><rect x="32.3" y="80.9" width="6.4" height="1.8" fill="#333" opacity="0.50"/><rect x="39.6" y="80.9" width="3.4" height="1.8" fill="#333" opacity="0.50"/><rect x="43.9" y="80.9" width="7.0" height="1.8" fill="#333" opacity="0.50"/><rect x="52.2" y="80.9" width="7.1" height="1.8" fill="#333" opacity="0.50"/><rect x="60.3" y="80.9" width="6.1" height="1.8" fill="#333" opacity="0.50"/><rect x="67.5" y="80.9" width="5.8" height="1.8" fill="#333" opacity="0.50"/><rect x="74.2" y="80.9" width="8.4" height="1.8" fill="#333" opacity="0.50"/><rect x="83.5" y="80.9" width="8.9" height="1.8" fill="#333" opacity="0.50"/><rect x="93.8" y="80.9" width="3.1" height="1.8" fill="#333" opacity="0.50"/><rect x="98.0" y="80.9" width="7.9" height="1.8" fill="#333" opacity="0.50"/><rect x="107.4" y="80.9" width="5.7" height="1.8" fill="#333" opacity="0.50"/><rect x="114.1" y="80.9" width="1.9" height="1.8" fill="#333" opacity="0.50"/><rect x="19.0" y="84.0" width="4.3" height="1.8" fill="#333" opacity="0.50"/><rect x="24.5" y="84.0" width="3.9" height="1.8" fill="#333" opacity="0.50"/><rect x="29.5" y="84.0" width="8.7" height="1.8" fill="#333" opacity="0.50"/><rect x="39.1" y="84.0" width="7.9" height="1.8" fill="#333" opacity="0.50"/><rect x="48.2" y="84.0" width="8.3" height="1.8" fill="#333" opacity="0.50"/><rect x="57.8" y="84.0" width="4.4" height="1.8" fill="#333" opacity="0.50"/><rect x="63.6" y="84.0" width="5.9" height="1.8" fill="#333" opacity="0.50"/><rect x="70.3" y="84.0" width="3.0" height="1.8" fill="#333" opacity="0.50"/><rect x="74.5" y="84.0" width="5.7" height="1.8" fill="#333" opacity="0.50"/><rect x="81.2" y="84.0" width="3.8" height="1.8" fill="#333" opacity="0.50"/><rect x="86.1" y="84.0" width="4.9" height="1.8" fill="#333" opacity="0.50"/><rect x="92.4" y="84.0" width="3.0" height="1.8" fill="#333" opacity="0.50"/><rect x="96.7" y="84.0" width="8.0" height="1.8" fill="#333" opacity="0.50"/><rect x="105.6" y="84.0" width="6.4" height="1.8" fill="#333" opacity="0.50"/><rect x="19.0" y="87.1" width="8.4" height="1.8" fill="#333" opacity="0.50"/><rect x="28.4" y="87.1" width="5.2" height="1.8" fill="#333" opacity="0.50"/><rect x="34.7" y="87.1" width="9.0" height="1.8" fill="#333" opacity="0.50"/><rect x="44.9" y="87.1" width="5.2" height="1.8" fill="#333" opacity="0.50"/><rect x="51.2" y="87.1" width="4.7" height="1.8" fill="#333" opacity="0.50"/><rect x="56.7" y="87.1" width="3.6" height="1.8" fill="#333" opacity="0.50"/><rect x="61.7" y="87.1" width="4.7" height="1.8" fill="#333" opacity="0.50"/><rect x="112.0" y="68.4" width="4.5" height="1.8" fill="#333" opacity="0.50"/><rect x="140.0" y="68.4" width="5.2" height="1.8" fill="#333" opacity="0.50"/><rect x="112.0" y="75.1" width="6.0" height="1.8" fill="#333" opacity="0.50"/><rect x="111.5" y="34.6" width="3.2" height="2.6" fill="none" stroke="#444" stroke-width=".6" opacity=".7"/><rect x="111.5" y="37.9" width="3.2" height="2.6" fill="none" stroke="#444" stroke-width=".6" opacity=".7"/><rect x="111.5" y="41.2" width="3.2" height="2.6" fill="none" stroke="#444" stroke-width=".6" opacity=".7"/><rect x="111.5" y="44.5" width="3.2" height="2.6" fill="none" stroke="#444" stroke-width=".6" opacity=".7"/><rect x="111.5" y="47.8" width="3.2" height="2.6" fill="none" stroke="#444" stroke-width=".6" opacity=".7"/><rect x="119.5" y="34.6" width="3.2" height="2.6" fill="none" stroke="#444" stroke-width=".6" opacity=".7"/><rect x="119.5" y="37.9" width="3.2" height="2.6" fill="none" stroke="#444" stroke-width=".6" opacity=".7"/><rect x="119.5" y="41.2" width="3.2" height="2.6" fill="none" stroke="#444" stroke-width=".6" opacity=".7"/><rect x="119.5" y="44.5" width="3.2" height="2.6" fill="none" stroke="#444" stroke-width=".6" opacity=".7"/><rect x="119.5" y="47.8" width="3.2" height="2.6" fill="none" stroke="#444" stroke-width=".6" opacity=".7"/><rect x="140.5" y="34.6" width="3.2" height="2.6" fill="none" stroke="#444" stroke-width=".6" opacity=".7"/><rect x="140.5" y="37.9" width="3.2" height="2.6" fill="none" stroke="#444" stroke-width=".6" opacity=".7"/><rect x="140.5" y="41.2" width="3.2" height="2.6" fill="none" stroke="#444" stroke-width=".6" opacity=".7"/><rect x="140.5" y="44.5" width="3.2" height="2.6" fill="none" stroke="#444" stroke-width=".6" opacity=".7"/><rect x="140.5" y="47.8" width="3.2" height="2.6" fill="none" stroke="#444" stroke-width=".6" opacity=".7"/><rect x="148.5" y="34.6" width="3.2" height="2.6" fill="none" stroke="#444" stroke-width=".6" opacity=".7"/><rect x="148.5" y="37.9" width="3.2" height="2.6" fill="none" stroke="#444" stroke-width=".6" opacity=".7"/><rect x="148.5" y="41.2" width="3.2" height="2.6" fill="none" stroke="#444" stroke-width=".6" opacity=".7"/><rect x="148.5" y="44.5" width="3.2" height="2.6" fill="none" stroke="#444" stroke-width=".6" opacity=".7"/><rect x="148.5" y="47.8" width="3.2" height="2.6" fill="none" stroke="#444" stroke-width=".6" opacity=".7"/><path d="M72 17.4H163" stroke="#333" stroke-width=".6" opacity=".6"/><rect x="117.5" y="24.5" width="3" height="2.6" fill="none" stroke="#444" stroke-width=".6" opacity=".7"/><rect x="144.5" y="24.5" width="3" height="2.6" fill="none" stroke="#444" stroke-width=".6" opacity=".7"/><rect x="118.5" y="51.5" width="3" height="2.6" fill="none" stroke="#444" stroke-width=".6" opacity=".7"/><rect x="145.5" y="51.5" width="3" height="2.6" fill="none" stroke="#444" stroke-width=".6" opacity=".7"/><rect x="118.5" y="61.5" width="3" height="2.6" fill="none" stroke="#444" stroke-width=".6" opacity=".7"/><rect x="145.5" y="61.5" width="3" height="2.6" fill="none" stroke="#444" stroke-width=".6" opacity=".7"/><rect x="118.5" y="65.5" width="3" height="2.6" fill="none" stroke="#444" stroke-width=".6" opacity=".7"/><rect x="145.5" y="65.5" width="3" height="2.6" fill="none" stroke="#444" stroke-width=".6" opacity=".7"/><rect x="118.5" y="72.5" width="3" height="2.6" fill="none" stroke="#444" stroke-width=".6" opacity=".7"/><rect x="145.5" y="72.5" width="3" height="2.6" fill="none" stroke="#444" stroke-width=".6" opacity=".7"/></g></svg>
</div>
<div class="a" style="left:705px;top:272px;width:165px;height:120px;border-radius:6px;overflow:hidden;background:#eceef1">
  <svg style="left:0;top:0" width="165" height="88">
   <defs>
    <linearGradient id="wg" x1="0" y1="0" x2="1" y2="0"><stop offset="0" stop-color="#c07a40"/><stop offset=".3" stop-color="#cb884a"/><stop offset=".55" stop-color="#c9844a"/><stop offset=".8" stop-color="#cf8d45"/><stop offset="1" stop-color="#c27a3c"/></linearGradient>
    <linearGradient id="wt" x1="0" y1="0" x2="0" y2="1"><stop offset="0" stop-color="#2e211b"/><stop offset="1" stop-color="#5a3a28" stop-opacity="0"/></linearGradient>
    <filter id="bl" x="-5%" y="-5%" width="110%" height="110%"><feGaussianBlur stdDeviation=".6"/></filter>
   </defs>
   <rect width="165" height="88" fill="url(#wg)"/>
   <g filter="url(#bl)">
    <rect x="0" y="0" width="165" height="10" fill="#3a281f"/>
    <rect x="0" y="8" width="165" height="10" fill="url(#wt)"/>
    <path d="M0 14L20 12V18L0 18Z" fill="#d8b070" opacity=".7"/>
    <g stroke="#7b4c2c" stroke-width=".9" opacity=".55" fill="none">
     <path d="M7 14L3 88M42 12L40 88M59 10L64 88M77 10L86 88M99 12L109 88M112 10L135 88M140 10L162 88M5 30H22M44 24H58M62 70H80M140 62L160 60"/>
    </g>
    <path d="M21 12H41L41 75H21Z" fill="#4f4036"/>
    <path d="M23 15L39 20L38 70L24 66Z" fill="#5e4d40" opacity=".7"/>
    <path d="M21 75H41V88H21Z" fill="#b98552" opacity=".8"/>
    <path d="M94 33L112 38L112 88L91 88Z" fill="#6b5a4c"/>
    <path d="M97 40L108 43L107 85L95 85Z" fill="#7e6b5a" opacity=".7"/>
    <path d="M112 66L122 68L124 88L113 88Z" fill="#6a6a70" opacity=".8"/>
    <path d="M106 7L130 6L136 22L108 20Z" fill="#4a3428" opacity=".8"/>
    <path d="M144 25L162 28L158 42L141 38Z" fill="#a06a3c"/>
    <path d="M127 45L141 47L140 53L126 51Z" fill="#b07a48"/>
    <path d="M136 34L146 48" stroke="#6a4a30" stroke-width="1.5"/>
   </g>
   <g fill="#5a3424" opacity=".8"><circle cx="38" cy="36" r=".9"/><circle cx="62" cy="40" r="1"/><circle cx="68" cy="44" r=".8"/><circle cx="56" cy="62" r=".8"/><circle cx="74" cy="64" r="1"/><circle cx="84" cy="58" r=".8"/><circle cx="15" cy="57" r=".8"/></g>
  </svg>
</div>
<div class="a" style="left:878px;top:272px;width:166px;height:120px;border-radius:6px;overflow:hidden;background:#eceef1">
  <div class="a" style="left:0;top:0;width:166px;height:88px;background:#e3e5e9"></div>
</div>
<svg style="left:944px;top:299px" width="36" height="36"><rect x="7" y="0.2" width="26.8" height="26.4" rx="3.5" fill="#6b7489"/><path d="M2.1 8.5V30.8Q2.1 32.7 4 32.7H25" fill="none" stroke="#6b7489" stroke-width="3.4" stroke-linecap="round"/><text x="20.4" y="18.2" text-anchor="middle" font-family="Liberation Sans" font-weight="700" font-size="10.6" fill="#e8e9ec" letter-spacing="-.2">PDF</text></svg>
<!-- checklist -->
<svg style="left:532px;top:505px" width="24" height="24" viewBox="0 0 24 24"><path fill="none" stroke="#141824" stroke-width="2" d="M17.8 5H5.5Q5 5 5 5.5V18.5Q5 19 5.5 19H18.5Q19 19 19 18.5V12"/><path fill="none" stroke="#141824" stroke-width="2" d="M8.3 11.5L11.8 15.2L21 5.5"/></svg>
<svg style="left:1014px;top:505px" width="12" height="24"><circle cx="6" cy="6" r="2" fill="#6b7489"/><circle cx="6" cy="12" r="2" fill="#6b7489"/><circle cx="6" cy="18" r="2" fill="#6b7489"/></svg>
<div class="a" style="left:567px;top:556px;width:18px;height:18px;border-radius:2px;background:#2f6feb"></div>
<svg style="left:567px;top:556px" width="18" height="18"><path d="M4 9.3L7.3 12.5L14 5.8" fill="none" stroke="#fff" stroke-width="2"/></svg>
<div class="cb" style="top:604px"></div>
<div class="cb" style="top:652px"></div>
<svg style="left:566px;top:699px" width="20" height="20"><path d="M3 10H17M10 3V17" stroke="#6b7489" stroke-width="2"/></svg>
<!-- right column -->
<svg style="left:1176px;top:106px" width="24" height="20"><path d="M7 8H17L12 13Z" fill="#6b7489"/></svg>
<div class="a" style="left:1084px;top:296px;width:24px;height:24px;border-radius:50%;background:#7c3f98;color:#fff;font-size:12px;display:flex;align-items:center;justify-content:center">C</div>
<svg style="left:1084px;top:549px" width="24" height="24"><path d="M6 22V4H12.6L14 6.2H19.2V14.3H13.4L12 12.1H6.5" fill="none" stroke="#d50b2e" stroke-width="2" stroke-linejoin="round"/></svg>
<div class="a" style="left:1084px;top:612px;width:304px;height:1px;background:#e2e4e9"></div>
<div id="t23" class="tx" style="left:531.9px;top:50.00px;font-size:30.70px;font-weight:700;color:#1a1f2c;letter-spacing:-0.382px;-webkit-text-stroke:0.6px currentColor;">Infestation Report</div>
<div id="t24" class="tx" style="left:531.5px;top:121.00px;font-size:12.60px;font-weight:400;color:#262b38;letter-spacing:0.300px;-webkit-text-stroke:0.4px currentColor;">Description</div>
<div id="t25" class="tx" style="left:531.8px;top:156.00px;font-size:17.40px;font-weight:400;color:#2c3242;letter-spacing:-0.214px;-webkit-text-stroke:0.2px currentColor;">Customer noted visible evidence on the first floor of Suite A. Fill out</div>
<div id="t26" class="tx" style="left:532.8px;top:180.00px;font-size:17.40px;font-weight:400;color:#2c3242;letter-spacing:-0.071px;-webkit-text-stroke:0.2px currentColor;">the form below to generate the infestation report.</div>
<div id="t27" class="tx" style="left:532.0px;top:241.00px;font-size:12.60px;font-weight:400;color:#262b38;letter-spacing:0.350px;-webkit-text-stroke:0.4px currentColor;">Attachments</div>
<div id="t28" class="tx" style="left:539.9px;top:368.00px;font-size:15.40px;font-weight:400;color:#2c3242;letter-spacing:-0.182px;-webkit-text-stroke:0.2px currentColor;">wood-infestation-rep...</div>
<div id="t29" class="tx" style="left:711.6px;top:368.00px;font-size:15.40px;font-weight:400;color:#2c3242;letter-spacing:-0.500px;-webkit-text-stroke:0.2px currentColor;">img_01020304050.jpg</div>
<div id="t30" class="tx" style="left:886.0px;top:368.00px;font-size:15.40px;font-weight:400;color:#2c3242;letter-spacing:-0.391px;-webkit-text-stroke:0.2px currentColor;">official-South_Caroli...</div>
<div id="t31" class="tx" style="left:531.5px;top:417.00px;font-size:17.40px;font-weight:400;color:#6b7489;letter-spacing:-0.133px;-webkit-text-stroke:0.2px currentColor;">+ Add attachment</div>
<div id="t32" class="tx" style="left:532.3px;top:474.00px;font-size:12.60px;font-weight:400;color:#262b38;letter-spacing:0.000px;-webkit-text-stroke:0.4px currentColor;">Subtask</div>
<div id="t33" class="tx" style="left:563.8px;top:509.00px;font-size:17.40px;font-weight:400;color:#262b38;letter-spacing:-0.175px;-webkit-text-stroke:0.4px currentColor;">Checklist</div>
<div id="t34" class="tx" style="left:600.2px;top:557.00px;font-size:17.40px;font-weight:400;color:#2c3242;letter-spacing:-0.436px;text-decoration:line-through;-webkit-text-stroke:0.2px currentColor;">Inspect</div>
<div id="t35" class="tx" style="left:600.0px;top:605.00px;font-size:17.40px;font-weight:400;color:#2c3242;letter-spacing:-0.080px;-webkit-text-stroke:0.2px currentColor;">Fill out official report</div>
<div id="t36" class="tx" style="left:599.8px;top:653.00px;font-size:17.40px;font-weight:400;color:#2c3242;letter-spacing:-0.316px;-webkit-text-stroke:0.2px currentColor;">Collect payment</div>
<div id="t37" class="tx" style="left:600.0px;top:701.00px;font-size:17.40px;font-weight:400;color:#6b7489;letter-spacing:-0.143px;-webkit-text-stroke:0.2px currentColor;">Add item</div>
<div id="t38" class="tx" style="left:1084.4px;top:74.00px;font-size:11.90px;font-weight:400;color:#262b38;letter-spacing:0.440px;-webkit-text-stroke:0.4px currentColor;">Status</div>
<div id="t39" class="tx" style="left:1084.3px;top:108.00px;font-size:17.40px;font-weight:400;color:#2c3242;letter-spacing:-0.740px;-webkit-text-stroke:0.2px currentColor;">In Progress</div>
<div id="t40" class="tx" style="left:1084.0px;top:170.00px;font-size:11.90px;font-weight:400;color:#262b38;letter-spacing:0.429px;-webkit-text-stroke:0.4px currentColor;">Due Date</div>
<div id="t41" class="tx" style="left:1083.8px;top:204.00px;font-size:17.40px;font-weight:400;color:#2c3242;letter-spacing:-0.514px;-webkit-text-stroke:0.2px currentColor;">Sep 25 &middot; 12:15 am</div>
<div id="t42" class="tx" style="left:1085.0px;top:266.00px;font-size:11.90px;font-weight:400;color:#262b38;letter-spacing:0.027px;-webkit-text-stroke:0.4px currentColor;">Assignee</div>
<div id="t43" class="tx" style="left:1115.7px;top:300.00px;font-size:17.40px;font-weight:400;color:#2c3242;letter-spacing:-0.681px;-webkit-text-stroke:0.2px currentColor;">Chris Johnson</div>
<div id="t44" class="tx" style="left:1084.0px;top:362.00px;font-size:11.90px;font-weight:400;color:#262b38;letter-spacing:0.629px;-webkit-text-stroke:0.4px currentColor;">Location</div>
<div id="t45" class="tx" style="left:1084.2px;top:396.00px;font-size:17.40px;font-weight:400;color:#2c3242;letter-spacing:-0.566px;-webkit-text-stroke:0.2px currentColor;">1725 Slough Avenue</div>
<div id="t46" class="tx" style="left:1084.0px;top:420.00px;font-size:17.40px;font-weight:400;color:#2c3242;letter-spacing:-0.586px;-webkit-text-stroke:0.2px currentColor;">Scranton, PA 18505</div>
<div id="t47" class="tx" style="left:1084.6px;top:460.00px;font-size:17.40px;font-weight:400;color:#6b7489;letter-spacing:-0.500px;-webkit-text-stroke:0.2px currentColor;">View on map</div>
<div id="t48" class="tx" style="left:1084.0px;top:518.00px;font-size:11.90px;font-weight:400;color:#262b38;letter-spacing:0.728px;-webkit-text-stroke:0.4px currentColor;">Priority</div>
<div id="t49" class="tx" style="left:1115.9px;top:552.00px;font-size:17.40px;font-weight:400;color:#2c3242;letter-spacing:-0.317px;-webkit-text-stroke:0.2px currentColor;">Critical</div>
<div id="t50" class="tx" style="left:1083.7px;top:645.00px;font-size:17.40px;font-weight:400;color:#6b7489;letter-spacing:-0.222px;-webkit-text-stroke:0.2px currentColor;">+ Add link</div>
</body></html>
